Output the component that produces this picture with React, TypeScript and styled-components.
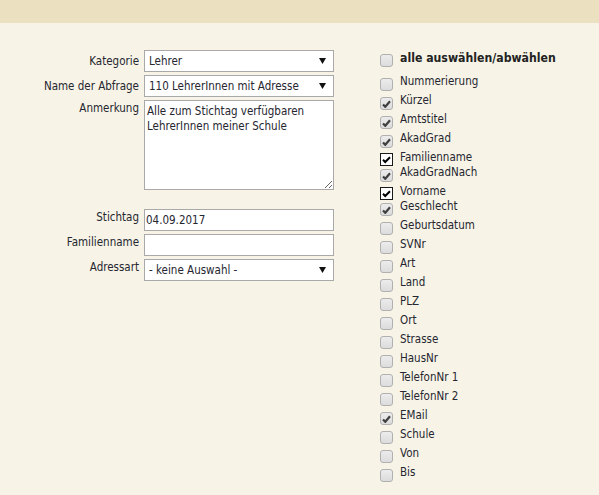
import React from "react";
import styled, { createGlobalStyle } from "styled-components";

const GlobalStyle = createGlobalStyle`
  html, body {
    margin: 0;
    padding: 0;
    background: #f7f4e7;
  }
  body {
    font-family: "DejaVu Sans Condensed", "Liberation Sans", sans-serif;
    font-size: 11.5px;
    color: #262630;
  }
`;

/**
 * Hintergrund der Seite und oberer Balken.
 */
const Page = styled.div`
  min-height: 100vh;
  background: #f7f4e7;
`;

const TopBar = styled.div`
  height: 23px;
  background: #ebe0bf;
`;

const Content = styled.div`
  display: flex;
  align-items: flex-start;
  gap: 46px;
  padding-top: 27px;
`;

/**
 * Linke Spalte: Formular.
 */
const Form = styled.div`
  display: flex;
  flex-direction: column;
  width: 334px;
`;

const FormRow = styled.div<{ $space?: number }>`
  display: grid;
  grid-template-columns: 139px 190px;
  column-gap: 5px;
  margin-top: ${(p) => p.$space ?? 3}px;

  &:first-child {
    margin-top: 0;
  }
`;

const Label = styled.label<{ $center?: boolean }>`
  text-align: right;
  line-height: 15px;
  align-self: ${(p) => (p.$center ? "center" : "start")};
  padding-top: ${(p) => (p.$center ? 0 : 1)}px;
  white-space: nowrap;
`;

const SelectWrap = styled.div`
  position: relative;
  height: 22px;
`;

const Select = styled.select`
  appearance: none;
  width: 100%;
  height: 22px;
  box-sizing: border-box;
  border: 1px solid #a9a9a9;
  border-radius: 0;
  background: #fff;
  padding: 0 18px 0 4px;
  font: inherit;
  color: #262630;
  outline: none;
`;

const Arrow = styled.svg`
  position: absolute;
  right: 8px;
  top: 8px;
  pointer-events: none;
`;

const TextInput = styled.input`
  width: 100%;
  height: 22px;
  box-sizing: border-box;
  border: 1px solid #a9a9a9;
  background: #fff;
  padding: 0 1px;
  font: inherit;
  color: #262630;
  outline: none;
`;

const TextArea = styled.textarea`
  width: 100%;
  height: 90px;
  box-sizing: border-box;
  border: 1px solid #a9a9a9;
  background: #fff;
  padding: 3px 2px 2px;
  font: inherit;
  line-height: 14.5px;
  color: #262630;
  resize: both;
  outline: none;
`;

/**
 * Rechte Spalte: Feldauswahl.
 */
const FieldList = styled.div`
  display: flex;
  flex-direction: column;
`;

const AllRow = styled.div`
  display: flex;
  align-items: flex-start;
  gap: 7px;
  height: 24px;
`;

const AllText = styled.span`
  font-weight: bold;
  font-size: 12.2px;
  line-height: 16px;
  color: #222;
`;

const FieldRow = styled.div<{ $classic?: boolean }>`
  display: flex;
  align-items: flex-start;
  gap: 7px;
  height: ${(p) => (p.$classic ? 15 : 19)}px;
`;

const FieldText = styled.span`
  line-height: 15px;
  white-space: nowrap;
`;

const Box = styled.span<{ $classic?: boolean; $top: number }>`
  flex: none;
  display: inline-flex;
  align-items: center;
  justify-content: center;
  box-sizing: border-box;
  width: 13px;
  height: 13px;
  margin-top: ${(p) => p.$top}px;
  border: 1px solid ${(p) => (p.$classic ? "#1a1a1a" : "#b0b0b0")};
  border-radius: ${(p) => (p.$classic ? 0 : 3)}px;
  background: ${(p) =>
    p.$classic ? "#fff" : "linear-gradient(#ececec, #dcdcdc)"};
`;

type FieldState = "off" | "on" | "fixed";

const fields: [string, FieldState][] = [
  ["Nummerierung", "off"],
  ["Kürzel", "on"],
  ["Amtstitel", "on"],
  ["AkadGrad", "on"],
  ["Familienname", "fixed"],
  ["AkadGradNach", "on"],
  ["Vorname", "fixed"],
  ["Geschlecht", "on"],
  ["Geburtsdatum", "off"],
  ["SVNr", "off"],
  ["Art", "off"],
  ["Land", "off"],
  ["PLZ", "off"],
  ["Ort", "off"],
  ["Strasse", "off"],
  ["HausNr", "off"],
  ["TelefonNr 1", "off"],
  ["TelefonNr 2", "off"],
  ["EMail", "on"],
  ["Schule", "off"],
  ["Von", "off"],
  ["Bis", "off"],
];

function CheckBox({ state, top }: { state: FieldState; top: number }) {
  const classic = state === "fixed";
  return (
    <Box $classic={classic} $top={top}>
      {state === "on" && (
        <svg width="9" height="8" viewBox="0 0 9 8">
          <path d="M1 4.5 L3.3 6.8 L8 1.3" fill="none" stroke="#3f3f3f" strokeWidth="2.2" />
        </svg>
      )}
      {classic && (
        <svg width="9" height="8" viewBox="0 0 9 8">
          <path d="M1 3.8 L3.2 6 L8 1.2" fill="none" stroke="#000" strokeWidth="2" />
        </svg>
      )}
    </Box>
  );
}

function DropDown({ value }: { value: string }) {
  return (
    <SelectWrap>
      <Select defaultValue={value}>
        <option>{value}</option>
      </Select>
      <Arrow width="7" height="6" viewBox="0 0 7 6">
        <path d="M0 0 H7 L3.5 6 Z" fill="#111" />
      </Arrow>
    </SelectWrap>
  );
}

export default function App() {
  return (
    <Page>
      <GlobalStyle />
      <TopBar />
      <Content>
        <Form>
          <FormRow>
            <Label $center>Kategorie</Label>
            <DropDown value="Lehrer" />
          </FormRow>
          <FormRow>
            <Label $center>Name der Abfrage</Label>
            <DropDown value="110 LehrerInnen mit Adresse" />
          </FormRow>
          <FormRow>
            <Label>Anmerkung</Label>
            <TextArea defaultValue="Alle zum Stichtag verfügbaren LehrerInnen meiner Schule" />
          </FormRow>
          <FormRow $space={19}>
            <Label>Stichtag</Label>
            <TextInput defaultValue="04.09.2017" />
          </FormRow>
          <FormRow>
            <Label>Familienname</Label>
            <TextInput defaultValue="" />
          </FormRow>
          <FormRow>
            <Label>Adressart</Label>
            <DropDown value="- keine Auswahl -" />
          </FormRow>
        </Form>
        <FieldList>
          <AllRow>
            <CheckBox state="off" top={4} />
            <AllText>alle auswählen/abwählen</AllText>
          </AllRow>
          {fields.map(([name, state]) => (
            <FieldRow key={name} $classic={state === "fixed"}>
              <CheckBox state={state} top={state === "fixed" ? 3 : 4} />
              <FieldText>{name}</FieldText>
            </FieldRow>
          ))}
        </FieldList>
      </Content>
    </Page>
  );
}
